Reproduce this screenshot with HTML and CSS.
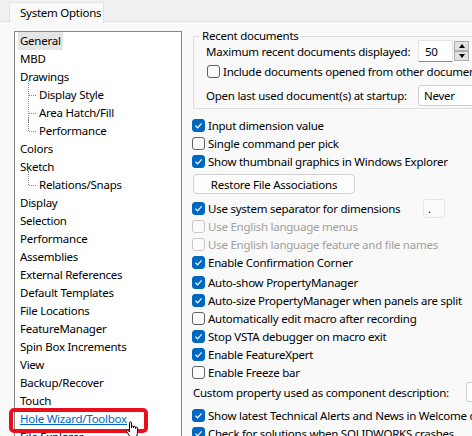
FILE: index.html
```html
<!DOCTYPE html>
<html lang="en">
<head>
    <meta charset="UTF-8">
    <title>System Options</title>
    <link rel="stylesheet" href="styles.css">
</head>
<body>
    <div class="tabs">
        <div class="tab">System Options</div>
    </div>
    <div class="panel">
        <ul class="tree">
            <li><span class="selected">General</span></li>
            <li>MBD</li>
            <li>Drawings</li>
            <li class="child">Display Style</li>
            <li class="child">Area Hatch/Fill</li>
            <li class="child last">Performance</li>
            <li>Colors</li>
            <li>Sketch</li>
            <li class="child last">Relations/Snaps</li>
            <li>Display</li>
            <li>Selection</li>
            <li>Performance</li>
            <li>Assemblies</li>
            <li>External References</li>
            <li>Default Templates</li>
            <li>File Locations</li>
            <li>FeatureManager</li>
            <li>Spin Box Increments</li>
            <li>View</li>
            <li>Backup/Recover</li>
            <li>Touch</li>
            <li><a class="link marked" href="#">Hole Wizard/Toolbox</a></li>
            <li>File Explorer</li>
        </ul>

        <div class="options">
            <fieldset class="group">
                <legend>Recent documents</legend>
                <div class="field-row first">
                    <span class="field-label">Maximum recent documents displayed:</span>
                    <span class="spin">
                        <span class="spin-value">50</span>
                        <span class="spin-btns">
                            <span class="spin-btn up"></span>
                            <span class="spin-btn down"></span>
                        </span>
                    </span>
                </div>
                <label class="check inset"><span class="box"></span>Include documents opened from other documents</label>
                <div class="field-row combo-row">
                    <span class="field-label">Open last used document(s) at startup:</span>
                    <span class="combo">Never</span>
                </div>
            </fieldset>

            <label class="check top-gap"><span class="box on"></span>Input dimension value</label>
            <label class="check"><span class="box"></span>Single command per pick</label>
            <label class="check"><span class="box on"></span>Show thumbnail graphics in Windows Explorer</label>
            <button class="btn">Restore File Associations</button>
            <label class="check sep-row"><span class="box on"></span><span class="sep-text">Use system separator for dimensions</span><span class="sep-input">.</span></label>
            <label class="check disabled"><span class="box"></span>Use English language menus</label>
            <label class="check disabled"><span class="box"></span>Use English language feature and file names</label>
            <label class="check"><span class="box on"></span>Enable Confirmation Corner</label>
            <label class="check gap2"><span class="box on"></span>Auto-show PropertyManager</label>
            <label class="check"><span class="box on"></span>Auto-size PropertyManager when panels are split</label>
            <label class="check"><span class="box"></span>Automatically edit macro after recording</label>
            <label class="check"><span class="box on"></span>Stop VSTA debugger on macro exit</label>
            <label class="check"><span class="box on"></span>Enable FeatureXpert</label>
            <label class="check"><span class="box"></span>Enable Freeze bar</label>
            <div class="field-row custom-row">
                <span class="custom-label">Custom property used as component description:</span>
                <span class="combo small">Description</span>
            </div>
            <label class="check gap4"><span class="box on"></span>Show latest Technical Alerts and News in Welcome dialog</label>
            <label class="check"><span class="box on"></span>Check for solutions when SOLIDWORKS crashes</label>
        </div>
    </div>

    <svg class="cursor" width="16" height="16" viewBox="0 0 16 16">
        <path d="M4.5 1.5 C4.5 0.7 6.5 0.7 6.5 1.5 L6.5 7 L6.5 5.5 C6.5 4.7 8.5 4.7 8.5 5.5 L8.5 7 L8.5 6 C8.5 5.2 10.5 5.2 10.5 6 L10.5 7.5 L10.5 6.8 C10.5 6 12.5 6 12.5 6.8 L12.5 11 C12.5 13 11.5 15.5 11.5 15.5 L5 15.5 L1.5 10.5 C1 9.5 2.2 8.6 3 9.4 L4.5 11 Z" fill="#fff" stroke="#000" stroke-width="1"/>
    </svg>
</body>
</html>
```

FILE: styles.css
```css
html, body {
    margin: 0;
    padding: 0;
    overflow: hidden;
}
body {
    font-family: "Noto Sans", "Liberation Sans", sans-serif;
    font-size: 11.5px;
    letter-spacing: -0.25px;
    color: #000;
    background: #f9f9f9;
    width: 472px;
    height: 436px;
    position: relative;
    white-space: nowrap;
}

/* tab strip */
.tabs {
    height: 22px;
    background: #f0f0f0;
    border-bottom: 1px solid #e3e3e3;
    box-sizing: border-box;
    padding: 2px 0 0 9px;
}
.tab {
    display: inline-block;
    height: 21px;
    line-height: 20px;
    padding: 0 0 0 10px;
    width: 95px;
    background: #f9f9f9;
    border: 1px solid #e3e3e3;
    border-bottom: none;
    box-sizing: border-box;
}

.panel {
    display: flex;
    align-items: flex-start;
    padding-top: 9px;
}

/* tree */
.tree {
    list-style: none;
    margin: 0 0 0 14px;
    padding: 0;
    width: 168px;
    height: 420px;
    flex: none;
    box-sizing: border-box;
    background: #fff;
    border: 1px solid #828790;
}
.tree li {
    height: 18px;
    line-height: 18px;
    padding-left: 5px;
    position: relative;
}
.tree .selected {
    display: inline-block;
    margin-left: -2px;
    padding: 0 2px;
    background: #e5e5e5;
}
.tree .child {
    padding-left: 24px;
}
.tree .child::before {
    content: "";
    position: absolute;
    left: 13px;
    top: -5px;
    height: 23px;
    border-left: 1px dotted #8a8a8a;
}
.tree .child.last::before {
    height: 14px;
}
.tree .child::after {
    content: "";
    position: absolute;
    left: 14px;
    top: 9px;
    width: 7px;
    border-top: 1px dotted #8a8a8a;
}
.link {
    color: #0066cc;
    text-decoration: underline;
}
.marked {
    position: relative;
}
.marked::after {
    content: "";
    position: absolute;
    left: -11px;
    top: -3px;
    width: 139px;
    height: 25px;
    box-sizing: border-box;
    border: 4px solid #e8101c;
    border-radius: 5px;
}

/* right side */
.options {
    margin-left: 10px;
    width: 360px;
    flex: none;
}
.group {
    margin: -2px 0 0 1px;
    padding: 0 12px 2px 12px;
    border: 1px solid #dcdcdc;
    width: 330px;
}
.group legend {
    padding: 0 2px;
    margin-left: -6px;
    line-height: 14px;
}
.field-row {
    display: flex;
    align-items: center;
}
.field-row.first {
    height: 22px;
    margin-top: -3px;
}
.field-label {
    width: 212px;
    flex: none;
}
.spin {
    display: flex;
    height: 22px;
}
.spin-value {
    padding-left: 6px;
    line-height: 22px;
    background: #fff;
    border: 1px solid #e5e5e5;
    border-bottom-color: #8a8a8a;
    box-sizing: border-box;
    width: 35px;
}
.spin-btns {
    display: flex;
    flex-direction: column;
    margin-left: 1px;
    padding: 1px 0;
}
.spin-btn {
    width: 15px;
    height: 10px;
    background: #e1e1e1;
    border: 1px solid #adadad;
    position: relative;
    box-sizing: border-box;
}
.spin-btn::after {
    content: "";
    position: absolute;
    left: 4px;
    top: 2px;
    border-left: 3px solid transparent;
    border-right: 3px solid transparent;
}
.spin-btn.up::after {
    border-bottom: 4px solid #000;
}
.spin-btn.down::after {
    border-top: 4px solid #000;
}
.combo-row {
    height: 21px;
    margin-top: 4px;
}
.combo {
    display: block;
    width: 120px;
    height: 21px;
    line-height: 20px;
    padding-left: 5px;
    background: #fff;
    border: 1px solid #d0d0d0;
    border-radius: 3px;
    box-sizing: border-box;
    flex: none;
}

/* check rows */
.check {
    display: flex;
    align-items: center;
    height: 18px;
}
.check.inset {
    margin-left: 1px;
    height: 19px;
}
.box {
    width: 13px;
    height: 13px;
    flex: none;
    margin-right: 3px;
    box-sizing: border-box;
    border: 1px solid #616161;
    border-radius: 3px;
    background: #fbfbfb;
}
.box.on {
    border-color: #0067c0;
    background: #0067c0 url("data:image/svg+xml;utf8,<svg xmlns='http://www.w3.org/2000/svg' width='11' height='11'><path d='M2.5 5.8 L4.6 7.8 L8.6 3.3' fill='none' stroke='white' stroke-width='1.2'/></svg>") no-repeat center;
}
.disabled {
    color: #a0a0a0;
}
.disabled .box {
    border-color: #c8c8c8;
}
.top-gap {
    margin-top: 7px;
}
.btn {
    display: block;
    margin: 4px 0 5px 1px;
    width: 162px;
    height: 20px;
    padding: 0;
    font: inherit;
    letter-spacing: inherit;
    color: #000;
    background: #fdfdfd;
    border: 1px solid #d0d0d0;
    border-radius: 4px;
}
.sep-text {
    width: 215px;
    flex: none;
}
.sep-input {
    display: inline-block;
    width: 22px;
    height: 19px;
    line-height: 17px;
    padding-left: 4px;
    box-sizing: border-box;
    background: #fbfbfb;
    border: 1px solid #e5e5e5;
    border-radius: 3px;
}
.gap2 {
    margin-top: 2px;
}
.custom-row {
    height: 20px;
    margin-top: 1px;
}
.custom-label {
    margin-left: 1px;
    width: 273px;
    flex: none;
}
.combo.small {
    height: 20px;
    line-height: 19px;
}
.gap4 {
    margin-top: 4px;
}

.cursor {
    position: absolute;
    left: 125px;
    top: 421px;
}
```
